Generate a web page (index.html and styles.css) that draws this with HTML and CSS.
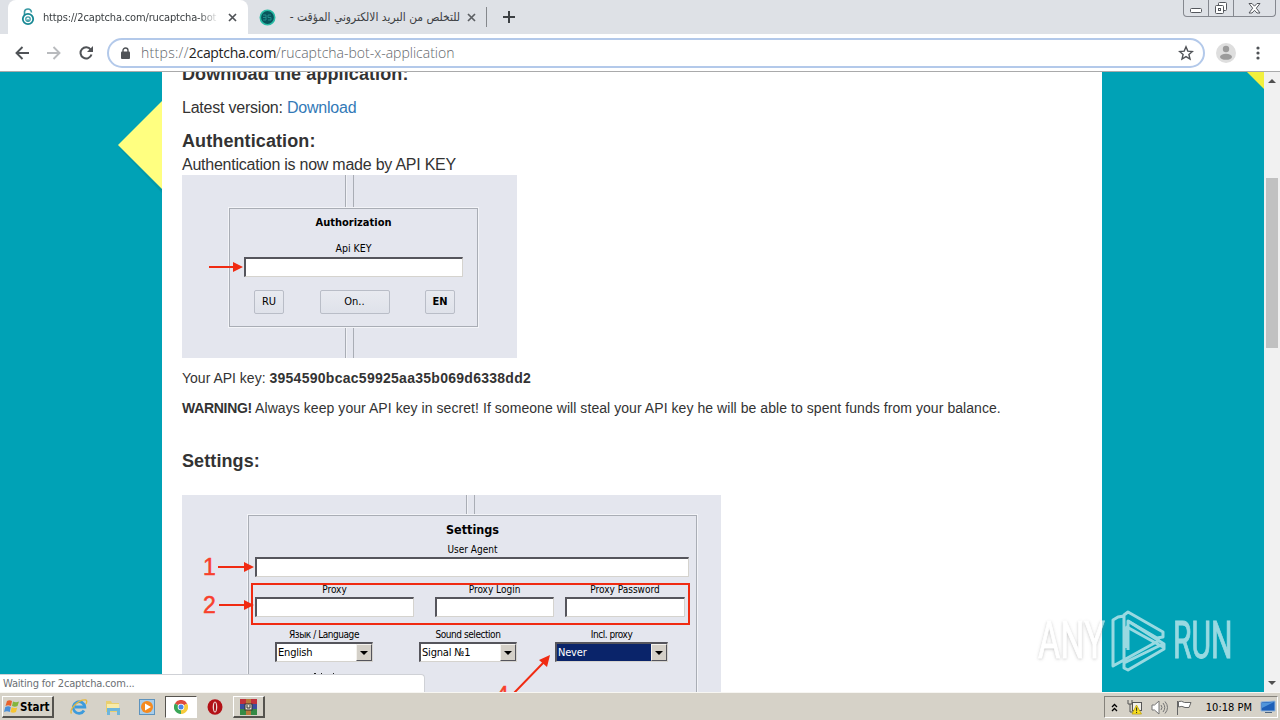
FILE: index.html
```
<!DOCTYPE html>
<html lang="en">
<head>
  <meta charset="UTF-8">
  <title>2captcha.com - rucaptcha bot x application</title>
  <link rel="stylesheet" href="styles.css">
</head>
<body>

  <!-- Tabs -->
  <header class="tabstrip">
    <div class="tab active">
      <svg class="favicon" width="16" height="18" viewBox="0 0 16 18" fill="none">
        <path d="M4.5 7V3.5Q5 1 8 1T11.5 4.5" stroke="#3a9aa4" stroke-width="1.6"/>
        <circle cx="8" cy="11" r="5.2" stroke="#178894" stroke-width="1.8"/>
        <circle cx="8" cy="11" r="2.2" stroke="#3c9ca5" stroke-width="1.3"/>
        <path d="M8 11v3" stroke="#178894"/>
      </svg>
      <span class="tab-title">https://2captcha.com/rucaptcha-bot</span>
      <svg class="tab-close" width="9" height="9" viewBox="0 0 9 9"><path d="M1 1l7 7M8 1l-7 7" stroke="#505357" stroke-width="1.7"/></svg>
    </div>
    <div class="tab second">
      <svg class="favicon" width="17" height="17" viewBox="0 0 17 17">
        <circle cx="8.5" cy="8.5" r="7.2" fill="#07565c" stroke="#29bba5" stroke-width="1.6"/>
        <path d="M4 6h3v5H4m0-2.5h3M9 6v2.500h3V11H9m0-5h3" fill="none" stroke="#248e8c"/>
      </svg>
      <span class="tab-title arabic" dir="rtl">للتخلص من البريد الالكتروني المؤقت -</span>
      <svg class="tab-close" width="9" height="9" viewBox="0 0 9 9"><path d="M1 1l7 7M8 1l-7 7" stroke="#5c5f63" stroke-width="1.7"/></svg>
    </div>
    <svg class="new-tab" width="12" height="12" viewBox="0 0 12 12"><path d="M6 0v12M0 6h12" stroke="#3c4043" stroke-width="2"/></svg>
    <div class="window-buttons">
      <span class="win min"><svg width="13" height="6" viewBox="0 0 13 6"><rect x=".5" y=".5" width="11" height="4" rx="1" fill="#fff" stroke="#54575d"/></svg></span>
      <span class="win max"><svg width="13" height="13" viewBox="0 0 13 13" fill="#fff" stroke="#54575d"><rect x="3.500" y=".5" width="8" height="8" rx="1"/><rect x=".5" y="3.500" width="8" height="8" rx="1"/><rect x="3.500" y="6.500" width="2" height="2"/></svg></span>
      <span class="win close"><svg width="13" height="11" viewBox="0 0 13 11"><path d="M1 .5h3l2.500 2.700L9 .5h3L8.300 5.200 12 10H9L6.500 7.300 4 10H1l3.700-4.800z" fill="#fff" stroke="#54575d"/></svg></span>
    </div>
  </header>

  <!-- Address bar -->
  <nav class="toolbar">
    <svg width="14" height="14" viewBox="0 0 14 14" fill="none" stroke="#505357" stroke-width="1.9"><path d="M14 7H1.500M7.500 1l-6 6 6 6"/></svg>
    <svg width="14" height="14" viewBox="0 0 14 14" fill="none" stroke="#b9bbbe" stroke-width="1.900"><path d="M0 7h12.500M6.500 1l6 6-6 6"/></svg>
    <svg width="14" height="14" viewBox="0 0 14 14"><path d="M11.700 3.600A5.600 5.600 0 1 0 12.500 8.500" fill="none" stroke="#505357" stroke-width="2"/><path d="M14 0v6H8z" fill="#505357"/></svg>
    <div class="omnibox">
      <svg width="9" height="12" viewBox="0 0 9 12"><path d="M2 5V3.500a2.500 2.500 0 0 1 5 0V5" fill="none" stroke="#505357" stroke-width="1.400"/><rect y="4.500" width="9" height="7.500" rx="1" fill="#505357"/></svg>
      <span class="url"><span class="scheme">https://</span><b>2captcha.com</b>/rucaptcha-bot-x-application</span>
      <svg class="star" width="16" height="16" viewBox="0 0 16 16"><path d="M8 1.800l1.800 4.300 4.600.4-3.500 3 1.100 4.500L8 11.600 4 14l1.100-4.500-3.500-3 4.600-.4z" fill="none" stroke="#505357" stroke-width="1.400"/></svg>
    </div>
    <svg class="avatar" width="20" height="20" viewBox="0 0 20 20"><circle cx="10" cy="10" r="10" fill="#dedede"/><circle cx="10" cy="6" r="3.200" fill="#9b9b9b"/><ellipse cx="10" cy="13.800" rx="6" ry="3" fill="#9b9b9b"/></svg>
    <svg class="dots" width="4" height="14" viewBox="0 0 4 14" fill="#505357"><circle cx="2" cy="2" r="1.600"/><circle cx="2" cy="7" r="1.600"/><circle cx="2" cy="12" r="1.600"/></svg>
  </nav>

  <main class="viewport">
    <div class="page">
      <svg class="shape-left" width="44" height="96" viewBox="0 0 44 96"><path d="M44 4v88L1 47z" fill="#00899b" opacity=".45"/><path d="M44 0v88L0 44z" fill="#ffff80"/></svg>
      <svg class="shape-right" width="17" height="17" viewBox="0 0 17 17"><path d="M0 0h17v17z" fill="#f2f03d"/></svg>

      <article class="content">
        <h2 class="t-download">Download the application:</h2>
        <p class="version">Latest version: <a href="#">Download</a></p>
        <h2 class="t-auth">Authentication:</h2>
        <p class="auth-note">Authentication is now made by API KEY</p>

        <!-- Authorization window -->
        <figure class="shot auth-shot">
          <div class="panel auth-panel">
            <strong class="panel-title">Authorization</strong>
            <span class="label">Api KEY</span>
            <div class="field"></div>
            <div class="buttons">
              <span class="btn">RU</span>
              <span class="btn wide">On..</span>
              <span class="btn bold">EN</span>
            </div>
          </div>
          <svg class="marks" width="335" height="183" viewBox="0 0 335 183"><path d="M27 92h26" stroke="#f02b12" stroke-width="2"/><path d="M51 87l10 5-10 5z" fill="#f02b12"/></svg>
        </figure>

        <p class="small api-key">Your API key: <b>3954590bcac59925aa35b069d6338dd2</b></p>
        <p class="small warning"><b>WARNING!</b> Always keep your API key in secret! If someone will steal your API key he will be able to spent funds from your balance.</p>
        <h2 class="t-settings">Settings:</h2>

        <!-- Settings window -->
        <figure class="shot settings-shot">
          <div class="panel settings-panel">
            <strong class="panel-title">Settings</strong>
            <span class="label">User Agent</span>
            <div class="field"></div>
            <div class="proxy-row">
              <div><span class="label">Proxy</span><div class="field"></div></div>
              <div><span class="label">Proxy Login</span><div class="field"></div></div>
              <div><span class="label">Proxy Password</span><div class="field"></div></div>
            </div>
            <div class="select-row">
              <div><span class="label">Язык / Language</span><div class="select"><span>English</span><i></i></div></div>
              <div><span class="label">Sound selection</span><div class="select"><span>Signal №1</span><i></i></div></div>
              <div><span class="label">Incl. proxy</span><div class="select selected"><span>Never</span><i></i></div></div>
            </div>
          </div>
          <svg class="marks" width="539" height="197" viewBox="0 0 539 197">
            <g stroke="#f02b12" stroke-width="2"><path d="M36 72h28M37 110h27M332 198l31-32"/></g>
            <g fill="#f02b12"><path d="M62 67l10 5-10 5zM62 105l10 5-10 5zM368 160l-3 12-8-7z"/></g>
            <g class="numbers"><text x="21" y="80">1</text><text x="21" y="118">2</text><text x="314" y="208">4</text></g>
            <path d="M132 178.500h2m5 0h1m11 0h1" stroke="#222"/>
          </svg>
        </figure>
      </article>

      <div class="status">Waiting for 2captcha.com...</div>

      <div class="watermark">
        <span class="any">ANY</span>
        <svg width="56" height="64" viewBox="0 0 56 64" fill="none" stroke="#fff" stroke-width="3" stroke-linejoin="round">
          <path d="M17 39V18l36 20V35L14 54V7L8 8 3 11v46L50 31M14 46V6l4-3 35 20v5l-6 1L18 12"/>
          <path d="M14 55v4l4 2 36-21v-5L18 12v29"/>
        </svg>
        <span class="run">RUN</span>
      </div>
    </div>

    <div class="scrollbar">
      <i class="up"></i>
      <span class="thumb"></span>
      <i class="down"></i>
    </div>
  </main>

  <!-- Windows taskbar -->
  <footer class="taskbar">
    <div class="start">
      <svg width="16" height="15" viewBox="0 0 16 15"><path d="M3 2q2.500-1.500 5 0L7 7Q4 5.500 1.500 7z" fill="#e8622c"/><path d="M9 2.500q3 1.500 6 0L13.500 7Q11 8.500 8 7z" fill="#84b53c"/><path d="M1.300 8q3-1.500 5.500 0l-1 5Q3 11.500 0 13z" fill="#4a8fd8"/><path d="M7.700 8.200q3 1.500 5.500.3L12 13q-3 1.500-5.500 0z" fill="#f6c431"/></svg>
      Start
    </div>
    <div class="quick">
      <span class="task"><svg width="18" height="18" viewBox="0 0 18 18" fill="none"><path d="M14 12.500A5.800 5.800 0 1 1 14.800 9H5" stroke="#3d9bdc" stroke-width="2.800"/><path d="M1.500 15.500C-1 12 8 1 16 2q1.500 1 0 4" stroke="#e6b83c" stroke-width="1.300"/></svg></span>
      <span class="task"><svg width="18" height="18" viewBox="0 0 18 18"><path d="M2 3h5l1 2h7v9H2z" fill="#e9cf70"/><path d="M3 6h12v4H3z" fill="#f8eba8"/><path d="M3 10h13v7h-3v-4H6v4H3z" fill="#6eb6dc"/></svg></span>
      <span class="task"><svg width="17" height="17" viewBox="0 0 17 17"><rect x=".5" y=".5" width="15" height="15" fill="#a8cdea" stroke="#5d93bd"/><circle cx="8" cy="8" r="6" fill="#f58a1f"/><path d="M6 4.500l6 3.500-6 3.500z" fill="#fff"/></svg></span>
      <span class="task pressed"><svg width="14" height="14" viewBox="0 0 14 14"><path d="M7 7L.9 3.500A7 7 0 0 1 13.100 3.500z" fill="#de4b3e"/><path d="M7 7l6.100-3.500A7 7 0 0 1 7 14z" fill="#f7cb3b"/><path d="M7 7v7A7 7 0 0 1 .9 3.500z" fill="#3aa657"/><circle cx="7" cy="7" r="3.300" fill="#fff"/><circle cx="7" cy="7" r="2.500" fill="#4a86e8"/></svg></span>
      <span class="task"><svg width="16" height="16" viewBox="0 0 16 16"><ellipse cx="8" cy="8" rx="7.500" ry="7.800" fill="#b31217"/><ellipse cx="8" cy="8" rx="2.300" ry="5.500" fill="#eed9d5"/><ellipse cx="8" cy="8" rx="1" ry="4.600" fill="#a31015"/></svg></span>
      <span class="task raised"><svg width="17" height="16" viewBox="0 0 17 16"><path d="M0 0h17v5H0z" fill="#c0303c"/><path d="M0 5h17v5H0z" fill="#3a4c9e"/><path d="M0 10h17v6H0z" fill="#348a45"/><path d="M6 0h5v16H6z" fill="#b9793a"/><rect x="5" y="5" width="7" height="6" fill="#e9e3d1" stroke="#333"/><path d="M7 6v3h3V6" fill="none" stroke="#333"/></svg></span>
    </div>
    <div class="tray">
      <svg width="7" height="9" viewBox="0 0 7 9" fill="none" stroke="#000" stroke-width="1.300"><path d="M1 4l2.500-2.500L6 4M1 8l2.500-2.500L6 8"/></svg>
      <svg width="17" height="16" viewBox="0 0 17 16"><path d="M2 1v4h4V1M4 5v8h5" fill="none" stroke="#555"/><rect x="6.500" y="3.500" width="9" height="8" fill="#f1efe8" stroke="#555"/><path d="M10.500 6l5 9H6z" fill="#f8df20" stroke="#b79a00" stroke-width=".7"/><path d="M10.600 8.500v3.300m0 1v1.200" stroke="#222"/></svg>
      <svg width="17" height="15" viewBox="0 0 17 15" fill="none" stroke="#747474"><path d="M1 5h2.500L8 1v13l-4.500-4H1z" fill="#fff"/><path d="M10 5q2 2.500 0 5M12 3q3.500 4.500 0 9M14 1.500q5 6 0 12"/></svg>
      <svg width="17" height="15" viewBox="0 0 17 15" fill="#fff" stroke="#666"><path d="M1.500 1v14" /><path d="M2.500 1.500q3-1 6 1h6.500l-2 5H9q-3-2-6.500-.5z"/></svg>
      <span class="clock">10:18 PM</span>
      <svg width="16" height="14" viewBox="0 0 16 14"><path d="M1 2l14-1v10H1z" fill="#1d5fb8" stroke="#91b5dc"/><path d="M2 3l12-1-12 6z" fill="#5095db"/><path d="M5 12.500h7" stroke="#4d6580"/></svg>
    </div>
  </footer>

</body>
</html>
```
FILE: styles.css
```
:root {
  --teal: #00a2b6;
  --shot: #e4e6ee;
  --red: #f02b12;
  --bar: #d6d2c8;
  --ui: "DejaVu Sans Condensed", "DejaVu Sans", sans-serif;
}
* {
  box-sizing: border-box;
}
body {
  margin: 0;
  width: 1280px;
  height: 720px;
  display: flex;
  flex-direction: column;
  overflow: hidden;
  font-family: "Liberation Sans", Arial, sans-serif;
  color: #333;
}
svg {
  display: block;
  flex: none;
}
h2, p, figure {
  margin: 0;
}

/* tabs */
.tabstrip {
  height: 34px;
  background: #dee1e6;
  display: flex;
  align-items: center;
  flex: none;
}
.tab {
  height: 34px;
  display: flex;
  align-items: center;
  font-family: var(--ui);
  font-size: 11px;
  color: #3c4043;
}
.tab.active {
  width: 240px;
  margin-left: 8px;
  padding-left: 12px;
  background: #fff;
  border-radius: 8px 8px 0 0;
}
.tab-title {
  width: 176px;
  margin-left: 7px;
  white-space: nowrap;
  overflow: hidden;
  letter-spacing: -0.15px;
  -webkit-mask-image: linear-gradient(90deg, #000 88%, transparent);
}
.tab-close {
  margin-left: 9px;
}
.tab.second {
  width: 239px;
  padding-left: 11px;
  border-right: 1px solid #85888c;
  height: 20px;
}
.tab-title.arabic {
  width: 180px;
  margin-left: 4px;
  font-size: 11.9px;
  letter-spacing: 0;
  -webkit-mask-image: none;
}
.tab.second .tab-close {
  margin-left: 7px;
}
.new-tab {
  margin-left: 16px;
}
.window-buttons {
  display: flex;
  align-self: flex-start;
  height: 17px;
  margin-left: auto;
  margin-right: 4px;
  border: 1px solid #85888f;
  border-top: 0;
  border-radius: 0 0 4px 4px;
}
.win {
  width: 25px;
  display: flex;
  align-items: center;
  justify-content: center;
  border-right: 1px solid #85888f;
}
.win.min {
  padding-top: 5px;
}
.win.close {
  width: 41px;
  border-right: 0;
}

/* address bar */
.toolbar {
  height: 38px;
  display: flex;
  align-items: center;
  flex: none;
  gap: 18px;
  padding-left: 15px;
  background: #fff;
  border-bottom: 1px solid #a9aaab;
}
.omnibox {
  width: 1098px;
  height: 30px;
  margin-left: -4px;
  padding: 0 9px 0 12px;
  display: flex;
  align-items: center;
  border: 2px solid #b3c9ea;
  border-radius: 15px;
}
.url {
  margin-left: 11px;
  font-family: "Open Sans", "Noto Sans", sans-serif;
  font-size: 14px;
  font-weight: 300;
  color: #62666b;
}
.url b {
  font-weight: 400;
  letter-spacing: -0.3px;
  color: #222;
}
.scheme {
  letter-spacing: 0.3px;
}
.star {
  margin-left: auto;
}
.avatar {
  margin-left: -7px;
}
.dots {
  margin-left: 2px;
}

/* page */
.viewport {
  height: 620px;
  display: flex;
  flex: none;
}
.page {
  position: relative;
  width: 1264px;
  background: var(--teal);
  overflow: hidden;
}
.shape-left {
  position: absolute;
  left: 118px;
  top: 29px;
}
.shape-right {
  position: absolute;
  right: 0;
  top: 0;
}
.content {
  position: relative;
  width: 940px;
  height: 620px;
  margin-left: 162px;
  padding: 0 20px;
  background: #fff;
  overflow: hidden;
}
.content h2 {
  font-size: 18px;
  line-height: 20px;
  letter-spacing: 0.1px;
  white-space: nowrap;
}
.content p {
  font-size: 16px;
  line-height: 20px;
  white-space: nowrap;
}
.content p.small {
  font-size: 14px;
  margin-top: 10px;
}
.content a {
  color: #337ab7;
  text-decoration: none;
}
.t-download {
  margin-top: -8px;
}
.version {
  padding-top: 14px;
  letter-spacing: -0.22px;
}
.t-auth {
  padding-top: 13px;
}
.auth-note {
  padding-top: 4px;
  letter-spacing: -0.24px;
}
.api-key b {
  letter-spacing: 0.27px;
}
.warning {
  letter-spacing: 0.06px;
}
.warning b {
  letter-spacing: -0.3px;
}
.t-settings {
  padding-top: 33px;
}

/* application windows */
.shot {
  position: relative;
  background: var(--shot);
  font-family: var(--ui);
  font-size: 10px;
  color: #000;
  overflow: hidden;
}
.auth-shot {
  width: 335px;
  height: 183px;
  padding: 33px 0 0 47px;
  background: linear-gradient(90deg, transparent 163px, #a9adb5 163px 164px, #f1f2f6 164px 165px, transparent 165px 171px, #a9adb5 171px 172px, transparent 172px) var(--shot);
}
.panel {
  background: var(--shot);
  border: 1px solid #a9adb5;
  box-shadow: 0 0 0 1px #f3f4f8;
  display: flex;
  flex-direction: column;
  align-items: center;
}
.auth-panel {
  width: 249px;
  height: 119px;
  padding: 7px 14px 0;
}
.panel-title {
  font-size: 11px;
  line-height: 14px;
}
.label {
  display: block;
  line-height: 12px;
  text-align: center;
  white-space: nowrap;
}
.auth-panel .label {
  margin-top: 12px;
  font-size: 10.5px;
}
.field {
  width: 100%;
  height: 20px;
  background: #fff;
  border: 1px solid #d5d3ce;
  border-top: 2px solid #55555c;
  border-left: 2px solid #55555c;
}
.auth-panel .field {
  margin-top: 3px;
}
.buttons {
  width: 201px;
  display: flex;
  justify-content: space-between;
  margin: 13px 0 0 2px;
}
.btn {
  width: 30px;
  height: 24px;
  line-height: 22px;
  text-align: center;
  font-size: 11px;
  border: 1px solid #b9bdc7;
  border-radius: 2px;
  background: linear-gradient(#e8eaf0, #dfe2ea);
}
.btn.wide {
  width: 70px;
}
.btn.bold {
  font-weight: bold;
}
.marks {
  position: absolute;
  left: 0;
  top: 0;
}
.settings-shot {
  width: 539px;
  height: 197px;
  margin-top: 24px;
  padding: 20px 0 0 66px;
  background: linear-gradient(90deg, transparent 284px, #a9adb5 284px 285px, #f1f2f6 285px 286px, transparent 286px 292px, #a9adb5 292px 293px, transparent 293px) var(--shot);
}
.settings-panel {
  width: 449px;
  height: 220px;
  padding: 7px 2px 0;
}
.settings-panel .panel-title {
  font-size: 12.5px;
}
.settings-panel > .label {
  margin-top: 7px;
}
.settings-panel > .field {
  width: 434px;
  align-self: flex-start;
  margin: 1px 0 0 4px;
}
.proxy-row {
  align-self: flex-start;
  width: 439px;
  height: 42px;
  margin-top: 6px;
  padding: 0 3px 0 2px;
  display: grid;
  grid-template-columns: 159px 119px 120px;
  justify-content: space-between;
  border: 2px solid var(--red);
}
.proxy-row > div:nth-child(2) {
  margin-left: 5px;
  margin-right: -5px;
}
.proxy-row .label {
  line-height: 10px;
  padding-bottom: 2px;
}
.select-row {
  align-self: flex-start;
  width: 393px;
  margin: 4px 0 0 24px;
  display: grid;
  grid-template-columns: 98px 98px 113px;
  justify-content: space-between;
}
.select-row > div:nth-child(2) {
  margin-left: 4px;
  margin-right: -4px;
}
.select-row .label {
  letter-spacing: -0.45px;
}
.select {
  height: 20px;
  margin-top: 1px;
  display: flex;
  background: #fff;
  border: 1px solid #d5d3ce;
  border-top: 2px solid #55555c;
  border-left: 2px solid #55555c;
}
.select span {
  flex: 1;
  padding-left: 1px;
  font-size: 11px;
  letter-spacing: -0.2px;
  line-height: 18px;
  white-space: nowrap;
}
.select.selected span {
  background: #0a246a;
  color: #fff;
}
.select i {
  width: 16px;
  background: #d4d0c8;
  border: 1px solid #f4f2ee;
  border-right-color: #55555c;
  border-bottom-color: #55555c;
  display: flex;
  align-items: center;
  justify-content: center;
}
.select i::before {
  content: "";
  border: 4px solid transparent;
  border-top-color: #000;
  border-bottom: 0;
}
.numbers {
  font-family: "Liberation Sans", sans-serif;
  font-size: 23px;
  fill: #f8402c;
  stroke: #f8402c;
  stroke-width: 0.5px;
}

/* overlays on the page */
.status {
  position: absolute;
  left: 0;
  bottom: 0;
  width: 425px;
  height: 18px;
  padding-left: 3px;
  background: #fff;
  border: 1px solid #cfd1d6;
  border-width: 1px 1px 0 0;
  border-top-right-radius: 4px;
  font-family: var(--ui);
  font-size: 11px;
  letter-spacing: -0.18px;
  line-height: 17px;
  color: #6b6f74;
}
.watermark {
  position: absolute;
  left: 1038px;
  top: 537px;
  display: flex;
  align-items: center;
  gap: 7px;
  opacity: .6;
  font-family: "Roboto", sans-serif;
  font-size: 51px;
  line-height: 64px;
}
.watermark span {
  transform-origin: 0 50%;
  color: #fff;
  -webkit-text-stroke: 1px #fff;
}
.watermark .any {
  width: 65px;
  transform: scaleX(.67);
  text-shadow: 0 1px 4px #888;
}
.watermark .run {
  width: 62px;
  transform: scaleX(.59);
}

/* scrollbar */
.scrollbar {
  width: 16px;
  background: #f1f1f1;
  display: flex;
  flex-direction: column;
  align-items: center;
}
.thumb {
  width: 12px;
  height: 170px;
  margin-top: 95px;
  background: #c1c1c1;
}
.up, .down {
  border: 4px solid transparent;
}
.up {
  margin-top: 7px;
  border-top: 0;
  border-bottom-color: #505050;
}
.down {
  margin-top: auto;
  margin-bottom: 7px;
  border-bottom: 0;
  border-top-color: #505050;
}

/* taskbar */
.taskbar {
  height: 28px;
  display: flex;
  align-items: center;
  flex: none;
  padding: 1px 2px 0;
  background: var(--bar);
  border-top: 1px solid #f7f6f2;
  font-family: var(--ui);
  font-size: 11px;
  color: #000;
}
.start {
  width: 52px;
  height: 22px;
  display: flex;
  align-items: center;
  padding-left: 1px;
  font-size: 11.5px;
  font-weight: bold;
  border: 1px solid #fff;
  border-right: 2px solid #55534e;
  border-bottom: 2px solid #55534e;
}
.quick {
  display: flex;
  margin-left: 9px;
  gap: 2px;
}
.task {
  width: 32px;
  height: 22px;
  display: flex;
  align-items: center;
  justify-content: center;
}
.task.pressed {
  background: #fff;
  border: 1px solid #55534e;
  border-right-color: #fff;
  border-bottom-color: #fff;
}
.task.raised {
  border: 1px solid #fff;
  border-right: 2px solid #55534e;
  border-bottom: 2px solid #55534e;
}
.tray {
  width: 174px;
  height: 22px;
  margin-left: auto;
  padding: 0 1px 0 6px;
  display: flex;
  align-items: center;
  justify-content: space-between;
  border: 1px solid #85827b;
  border-right-color: #fff;
  border-bottom-color: #fff;
}
.clock {
  margin-left: 5px;
}
```
